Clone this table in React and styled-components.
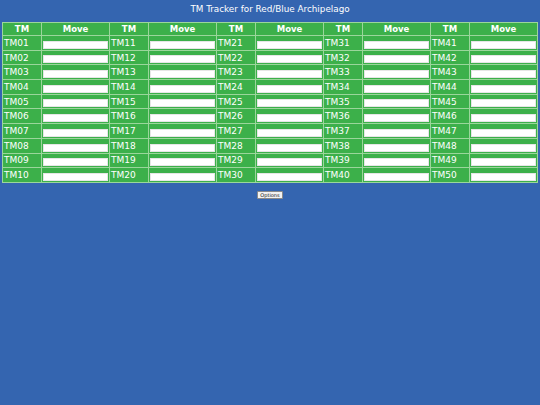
import React from "react";
import styled, { createGlobalStyle } from "styled-components";

const Global = createGlobalStyle`
  html, body { margin: 0; padding: 0; background: #3465b0; }
  body { font-family: "DejaVu Sans", Verdana, sans-serif; }
`;

const Page = styled.div`
  width: 540px;
  height: 405px;
  background: #3465b0;
  display: flex;
  flex-direction: column;
  align-items: center;
`;

const Title = styled.h1`
  margin: 3px 0 0;
  height: 19px;
  font-size: 8.8px;
  font-weight: normal;
  color: #ffffff;
  line-height: 12px;
`;

const Table = styled.table`
  width: 534px;
  border-collapse: collapse;
  border: 1px solid #b5e0b5;
  table-layout: fixed;
`;

const HeadRow = styled.tr`
  height: 13px;
`;

const Row = styled.tr`
  height: 14.7px;
`;

const Th = styled.th`
  box-sizing: border-box;
  background: #3cb04a;
  color: #ffffff;
  font-size: 8.5px;
  font-weight: bold;
  padding: 0;
  line-height: 11px;
  border: 1px solid #9bd69b;
  width: ${(p) => (p.$move ? "68px" : "39px")};
`;

const Td = styled.td`
  box-sizing: border-box;
  background: #3cb04a;
  color: #ffffff;
  font-size: 9px;
  padding: 0 0 0 1px;
  line-height: 12px;
  border: 1px solid #9bd69b;
  white-space: nowrap;
  overflow: hidden;
`;

const MoveCell = styled(Td)`
  padding: 3px 1px 1px 1px;
  line-height: 8px;
  vertical-align: bottom;
`;

const MoveInput = styled.input`
  display: block;
  box-sizing: border-box;
  width: 100%;
  height: 8px;
  margin: 0;
  padding: 0;
  font-size: 6px;
  border: 1px solid #e6e6e6;
  background: #ffffff;
`;

const Footer = styled.div`
  margin-top: 8px;
  display: flex;
  justify-content: center;
`;

const OptionsButton = styled.button`
  font-family: "DejaVu Sans", Verdana, sans-serif;
  font-size: 5px;
  padding: 1px 2px;
  height: 8px;
  line-height: 5px;
  background: #f2f2f2;
  color: #111;
  border: 1px solid #8a8a8a;
  border-radius: 1px;
`;

const pad = (n) => (n < 10 ? "0" + n : String(n));

export default function App() {
  const rows = Array.from({ length: 10 }, (_, r) => r + 1);
  const groups = [0, 10, 20, 30, 40];
  return (
    <Page>
      <Global />
      <Title>TM Tracker for Red/Blue Archipelago</Title>
      <Table>
        <thead>
          <HeadRow>
            {groups.map((g) => (
              <React.Fragment key={g}>
                <Th>TM</Th>
                <Th $move>Move</Th>
              </React.Fragment>
            ))}
          </HeadRow>
        </thead>
        <tbody>
          {rows.map((r) => (
            <Row key={r}>
              {groups.map((g) => (
                <React.Fragment key={g}>
                  <Td>TM{pad(g + r)}</Td>
                  <MoveCell>
                    <MoveInput type="text" />
                  </MoveCell>
                </React.Fragment>
              ))}
            </Row>
          ))}
        </tbody>
      </Table>
      <Footer>
        <OptionsButton>Options</OptionsButton>
      </Footer>
    </Page>
  );
}
